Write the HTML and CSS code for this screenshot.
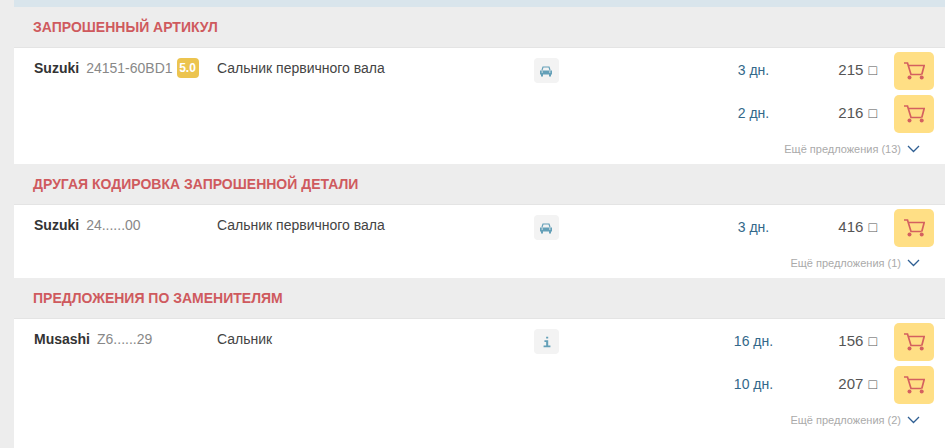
FILE: index.html
```html
<!DOCTYPE html>
<html lang="en">
<head>
  <meta charset="UTF-8" />
  <meta name="viewport" content="width=device-width, initial-scale=1.0" />
  <title>Предложения</title>
  <link rel="stylesheet" href="styles.css">
</head>
<body>
  <svg class="defs" width="0" height="0">
    <symbol id="car" viewBox="0 0 14 12">
      <path d="M3 5 4 2h6l1 3" fill="none" stroke="currentColor" stroke-width="1.2"/>
      <path d="M1 5.500h12v4H1zM2 9h2v2.400H2zM10 9h2v2.400h-2z" fill="currentColor"/>
      <path d="M2.500 7h1.500M10 7h1.500" stroke="#f3f3f3" stroke-width="1"/>
    </symbol>
    <symbol id="info" viewBox="0 0 14 14">
      <path d="M6 1h2.400v2H6zM4 5h4.400v6H11v2H3v-2h3V7H4z" fill="currentColor"/>
    </symbol>
    <symbol id="cart" viewBox="0 0 21 18">
      <path d="M0 1H3.500L7 12.500H17.500M4.200 3.500H20.200L17.800 12.500" fill="none" stroke="currentColor" stroke-width="1.700"/>
      <circle cx="5.500" cy="15.500" r="2" fill="currentColor"/>
      <circle cx="17.700" cy="15.500" r="2" fill="currentColor"/>
    </symbol>
  </svg>

  <div class="page">
    <div class="top-strip"></div>

    <div class="section-head">Запрошенный артикул</div>
    <div class="section-body">
      <div class="row">
        <div class="part">
          <b class="brand">Suzuki</b>
          <span class="code">24151-60BD1</span>
          <span class="rating">5.0</span>
        </div>
        <div class="name">Сальник первичного вала</div>
        <div class="kind"><svg class="icon-car"><use href="#car"/></svg></div>
        <div class="days">3 дн.</div>
        <div class="price">215 <span class="cur">□</span></div>
        <button class="buy"><svg class="icon-cart"><use href="#cart"/></svg></button>
      </div>
      <div class="row">
        <div class="part"></div>
        <div class="name"></div>
        <div></div>
        <div class="days">2 дн.</div>
        <div class="price">216 <span class="cur">□</span></div>
        <button class="buy"><svg class="icon-cart"><use href="#cart"/></svg></button>
      </div>
      <div class="more">
        <span>Ещё предложения (13)</span>
        <svg class="chevron" viewBox="0 0 13 8"><path d="M1 1l5.500 5.500L12 1" fill="none" stroke="currentColor" stroke-width="1.300"/></svg>
      </div>
    </div>

    <div class="section-head">Другая кодировка запрошенной детали</div>
    <div class="section-body">
      <div class="row">
        <div class="part">
          <b class="brand">Suzuki</b>
          <span class="code">24......00</span>
        </div>
        <div class="name">Сальник первичного вала</div>
        <div class="kind"><svg class="icon-car"><use href="#car"/></svg></div>
        <div class="days">3 дн.</div>
        <div class="price">416 <span class="cur">□</span></div>
        <button class="buy"><svg class="icon-cart"><use href="#cart"/></svg></button>
      </div>
      <div class="more">
        <span>Ещё предложения (1)</span>
        <svg class="chevron" viewBox="0 0 13 8"><path d="M1 1l5.500 5.500L12 1" fill="none" stroke="currentColor" stroke-width="1.300"/></svg>
      </div>
    </div>

    <div class="section-head">Предложения по заменителям</div>
    <div class="section-body">
      <div class="row">
        <div class="part">
          <b class="brand">Musashi</b>
          <span class="code">Z6......29</span>
        </div>
        <div class="name">Сальник</div>
        <div class="kind"><svg class="icon-info"><use href="#info"/></svg></div>
        <div class="days">16 дн.</div>
        <div class="price">156 <span class="cur">□</span></div>
        <button class="buy"><svg class="icon-cart"><use href="#cart"/></svg></button>
      </div>
      <div class="row">
        <div class="part"></div>
        <div class="name"></div>
        <div></div>
        <div class="days">10 дн.</div>
        <div class="price">207 <span class="cur">□</span></div>
        <button class="buy"><svg class="icon-cart"><use href="#cart"/></svg></button>
      </div>
      <div class="more">
        <span>Ещё предложения (2)</span>
        <svg class="chevron" viewBox="0 0 13 8"><path d="M1 1l5.500 5.500L12 1" fill="none" stroke="currentColor" stroke-width="1.300"/></svg>
      </div>
    </div>
  </div>
</body>
</html>
```

FILE: styles.css
```css
html,
body {
  margin: 0;
  height: 100%;
  overflow: hidden;
}

body {
  font-family: "Liberation Sans", Arial, sans-serif;
  font-size: 14px;
  color: #444;
  background-color: #ededed;
  padding-left: 14px;
}

.defs {
  display: block;
  height: 0;
}

.page {
  background: #fff;
  height: 448px;
}

.top-strip {
  height: 7px;
  background-color: #d9e5ec;
}

.section-head {
  box-sizing: border-box;
  height: 41px;
  padding: 0 0 1px 19px;
  display: flex;
  align-items: center;
  background-color: #ededed;
  border-bottom: 1px solid #e4e4e4;
  color: #cf5a5e;
  font-weight: bold;
  text-transform: uppercase;
}

.section-body {
  padding-top: 4px;
}

.row {
  display: grid;
  grid-template-columns: 183px 317px 169px 101px 74px 56px;
  height: 38px;
  padding-left: 20px;
}

.row + .row {
  margin-top: 5px;
}

.part {
  display: flex;
  align-items: flex-start;
  line-height: 20px;
  padding-top: 6px;
}

.brand {
  color: #333;
  margin-right: 7px;
}

.code {
  color: #888;
}

.rating {
  width: 22px;
  height: 20px;
  margin-left: 4px;
  background-color: #ecc44f;
  border-radius: 4px;
  color: #fff;
  font-size: 12px;
  font-weight: bold;
  line-height: 20px;
  text-align: center;
}

.name {
  line-height: 20px;
  padding-top: 6px;
  color: #444;
}

.kind {
  width: 25px;
  height: 25px;
  margin-top: 6px;
  background-color: #f3f3f3;
  border-radius: 4px;
  color: #64a0b8;
  display: flex;
  align-items: center;
  justify-content: center;
}

.icon-car {
  width: 14px;
  height: 12px;
  margin: 1px 2px 0 0;
}

.icon-info {
  width: 12px;
  height: 12px;
  margin-top: 1px;
}

.days {
  text-align: center;
  line-height: 36px;
  color: #33688a;
}

.price {
  text-align: right;
  font-size: 15px;
  line-height: 36px;
  white-space: nowrap;
  color: #555;
  padding-right: 1px;
}

.cur {
  font-size: 14px;
  margin-left: 1px;
}

.buy {
  margin: 0 0 0 16px;
  width: 40px;
  height: 38px;
  padding: 0 0 0 1px;
  border: none;
  border-radius: 5px;
  background-color: #ffdf85;
  color: #d4605f;
  display: flex;
  align-items: center;
  justify-content: center;
}

.icon-cart {
  width: 21px;
  height: 18px;
}

.more {
  height: 31px;
  display: flex;
  align-items: center;
  justify-content: flex-end;
  padding: 1px 25px 0 0;
  box-sizing: border-box;
  font-size: 11px;
  color: #aaa;
}

.chevron {
  width: 13px;
  height: 8px;
  margin-left: 6px;
  color: #2f5f93;
}
```
